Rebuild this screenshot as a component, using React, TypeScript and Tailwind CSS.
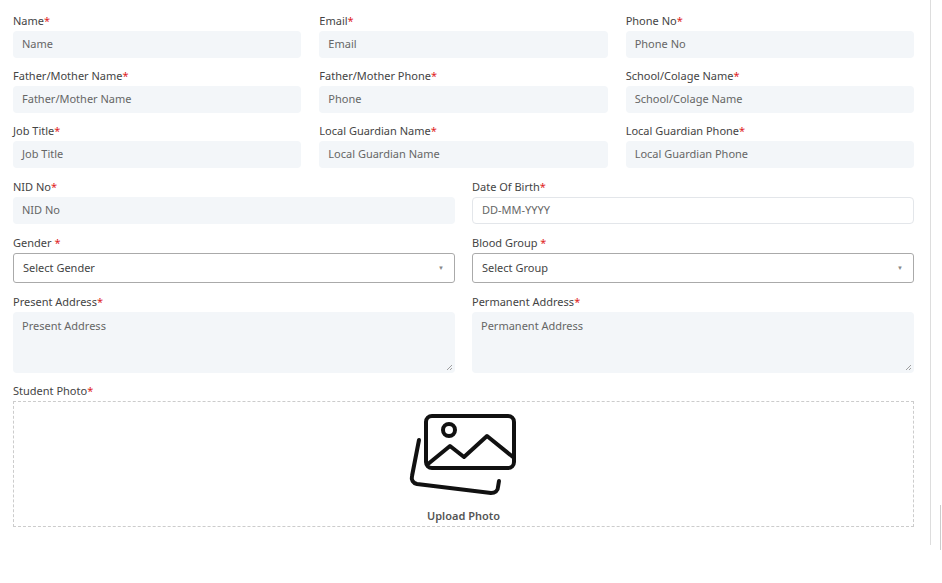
import React from "react";

const Label = ({ t, sp }: { t: string; sp?: boolean }) => (
  <label className="block text-[11px] leading-[13px] text-[#444] mb-[4px]">
    {t}
    {sp ? " " : ""}
    <span className="text-[#e02424]">*</span>
  </label>
);

const Input = ({ l, p }: { l: string; p: string }) => (
  <div>
    <Label t={l} />
    <div className="h-[27px] rounded-[4px] bg-[#f3f6f9] px-[9px] flex items-center text-[11px] text-[#666]">{p}</div>
  </div>
);

const Select = ({ l, p }: { l: string; p: string }) => (
  <div>
    <Label t={l} sp />
    <div className="h-[30px] rounded-[3px] border border-[#aaa] bg-white px-[9px] flex items-center justify-between text-[11px] text-[#444]">
      <span>{p}</span>
      <span className="text-[6px] text-[#888] mr-[1px]">▼</span>
    </div>
  </div>
);

const Area = ({ l, p }: { l: string; p: string }) => (
  <div>
    <Label t={l} />
    <div className="relative h-[61px] rounded-[4px] bg-[#f3f6f9] px-[9px] pt-[6px] text-[11px] text-[#666]">
      {p}
      <svg className="absolute right-[2px] bottom-[2px]" width="7" height="7" viewBox="0 0 7 7">
        <path d="M6 1L1 6M6 4L4 6" stroke="#888" strokeWidth="0.8" />
      </svg>
    </div>
  </div>
);

export default function App() {
  return (
    <div className="w-[942px] h-[583px] bg-white relative" style={{ fontFamily: '"Noto Sans", "Open Sans", sans-serif' }}>
      <div className="absolute left-[930px] top-0 h-[545px] w-px bg-[#ddd]" />
      <div className="absolute left-[940px] top-[505px] h-[45px] w-px bg-[#ccc]" />
      <div className="pl-[13px] pr-[28px] pt-[14px]">
        <div className="grid grid-cols-3 gap-x-[18px] gap-y-[11px]">
          <Input l="Name" p="Name" />
          <Input l="Email" p="Email" />
          <Input l="Phone No" p="Phone No" />
          <Input l="Father/Mother Name" p="Father/Mother Name" />
          <Input l="Father/Mother Phone" p="Phone" />
          <Input l="School/Colage Name" p="School/Colage Name" />
          <Input l="Job Title" p="Job Title" />
          <Input l="Local Guardian Name" p="Local Guardian Name" />
          <Input l="Local Guardian Phone" p="Local Guardian Phone" />
        </div>
        <div className="grid grid-cols-2 gap-x-[17px] mt-[12px]">
          <Input l="NID No" p="NID No" />
          <div>
            <Label t="Date Of Birth" />
            <div className="h-[27px] rounded-[4px] border border-[#e3e6ea] bg-white px-[9px] flex items-center text-[11px] text-[#666]">DD-MM-YYYY</div>
          </div>
        </div>
        <div className="grid grid-cols-2 gap-x-[17px] mt-[12px]">
          <Select l="Gender" p="Select Gender" />
          <Select l="Blood Group" p="Select Group" />
        </div>
        <div className="grid grid-cols-2 gap-x-[17px] mt-[12px]">
          <Area l="Present Address" p="Present Address" />
          <Area l="Permanent Address" p="Permanent Address" />
        </div>
        <div className="mt-[11px]">
          <Label t="Student Photo" />
          <div className="h-[126px] border border-dashed border-[#ccc] flex flex-col items-center pt-[11px]">
            <svg width="110" height="82" viewBox="0 0 110 82" fill="none" stroke="#111" strokeWidth="4" strokeLinecap="round" strokeLinejoin="round">
              <rect x="17" y="3" width="88" height="52" rx="6" />
              <circle cx="40" cy="17" r="6" />
              <path d="M19 51L41 33L55 44L78 23L104 44" />
              <path d="M10 27L3 63C2 67 4 70 8 71L82 80C86 80 89 78 89 74L90 68" />
            </svg>
            <div className="mt-[13px] text-[11px] font-semibold text-[#555]">Upload Photo</div>
          </div>
        </div>
      </div>
    </div>
  );
}
